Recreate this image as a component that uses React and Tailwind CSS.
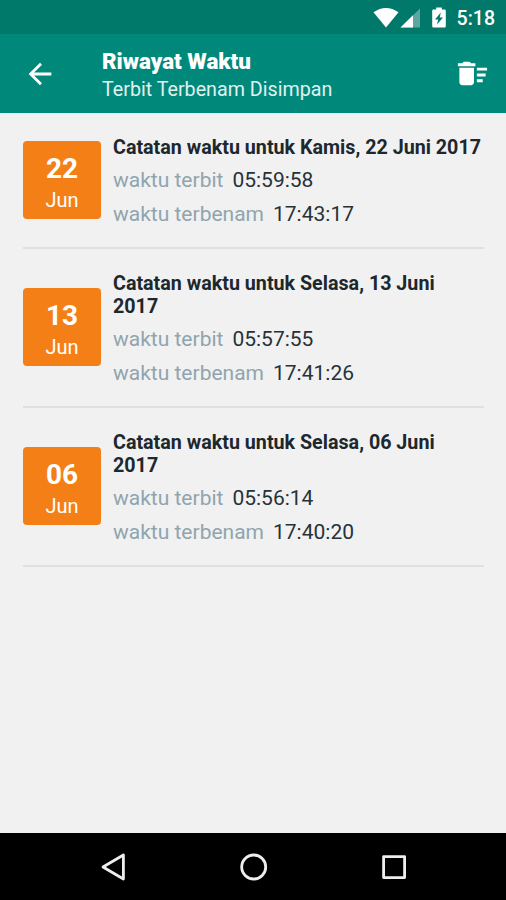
import { MdArrowBack, MdDeleteSweep } from "react-icons/md";

const records = [
  {
    day: "22",
    month: "Jun",
    title: "Catatan waktu untuk Kamis, 22 Juni 2017",
    rise: "05:59:58",
    set: "17:43:17",
  },
  {
    day: "13",
    month: "Jun",
    title: "Catatan waktu untuk Selasa, 13 Juni 2017",
    rise: "05:57:55",
    set: "17:41:26",
  },
  {
    day: "06",
    month: "Jun",
    title: "Catatan waktu untuk Selasa, 06 Juni 2017",
    rise: "05:56:14",
    set: "17:40:20",
  },
];

function StatusBar() {
  return (
    <div className="flex h-[34px] shrink-0 items-center justify-end bg-[#00796b] pr-[11px] pt-[1px] text-white">

      {/* Wifi */}
      <svg width="26" height="21" viewBox="0 0 26 21" fill="currentColor">
        <path d="M0.5 5.2 Q13 -3.4 25.5 5.2 L13 20.4 Z" />
      </svg>

      {/* Signal */}
      <svg className="ml-[1px]" width="21" height="20" viewBox="0 0 21 20" fill="currentColor">
        <path d="M0.5 19.5 L20 0.5 V19.5 Z" opacity="0.35" />
        <path d="M0.5 19.5 L13 7.3 V19.5 Z" />
      </svg>

      {/* Battery */}
      <svg className="ml-[11px]" width="14" height="21" viewBox="0 0 14 21">
        <path d="M4.2 0.5 H9.8 V2.5 H12.6 Q13.8 2.5 13.8 3.7 V19.3 Q13.8 20.5 12.6 20.5 H1.4 Q0.2 20.5 0.2 19.3 V3.7 Q0.2 2.5 1.4 2.5 H4.2 Z" fill="#fff" />
        <path d="M8.8 5.5 L3 12.4 H6.2 L5 17.5 L11 10.5 H7.7 Z" fill="#00796b" />
      </svg>

      <span className="ml-[11px] pt-[3px] text-[19.5px] font-medium leading-none">5:18</span>

    </div>
  );
}

function Header() {
  return (
    <header className="flex h-[79px] shrink-0 items-center bg-[#00897b] pl-[23px] pr-[16px] text-white">

      <button className="block">
        <MdArrowBack size={34} />
      </button>

      <div className="ml-[45px] flex-1 pt-[3px]">
        <h1 className="text-[22.4px] font-black leading-[28px]">Riwayat Waktu</h1>
        <p className="pt-[1px] text-[19.7px] leading-[28px] text-[#e0f2f0]">Terbit Terbenam Disimpan</p>
      </div>

      <button className="block">
        <MdDeleteSweep size={35} />
      </button>

    </header>
  );
}

function TimeLine({ label, value }) {
  return (
    <p className="flex gap-[9px] text-[21px] leading-[34px]">
      <span className="text-[#90a4ae]">{label}</span>
      <span className="text-[#263238]">{value}</span>
    </p>
  );
}

function RecordRow({ record }) {
  return (
    <li className="flex items-center gap-[12px] border-b-2 border-[#e0e0e0] pb-[16px] pt-[23px]">

      <div className="mb-[8px] flex size-[78px] shrink-0 flex-col items-center rounded-[4px] bg-[#f57f17] pt-[11px] text-white">
        <span className="text-[28px] font-bold leading-[34px]">{record.day}</span>
        <span className="text-[20px] leading-[28px]">{record.month}</span>
      </div>

      <div className="flex-1">
        <h2 className="text-[19.7px] font-bold leading-[23px] text-[#1c282e]">{record.title}</h2>
        <div className="pt-[4px]">
          <TimeLine label="waktu terbit" value={record.rise} />
          <TimeLine label="waktu terbenam" value={record.set} />
        </div>
      </div>

    </li>
  );
}

function NavBar() {
  return (
    <nav className="flex h-[67px] shrink-0 items-center justify-between bg-black pl-[100px] pr-[98px]">
      <svg width="28" height="28" viewBox="0 0 28 28" fill="none" stroke="#eee" strokeWidth="2.8" strokeLinejoin="round">
        <path d="M3 14 L23.4 2 V26 Z" />
      </svg>
      <svg width="28" height="28" viewBox="0 0 28 28" fill="none" stroke="#eee" strokeWidth="2.8">
        <circle cx="13.7" cy="14" r="12" />
      </svg>
      <svg width="28" height="28" viewBox="0 0 28 28" fill="none" stroke="#eee" strokeWidth="2.8" strokeLinejoin="round">
        <rect x="3.6" y="3.6" width="21" height="21" />
      </svg>
    </nav>
  );
}

export default function App() {
  return (
    <div className="flex h-[900px] w-[506px] flex-col overflow-hidden bg-[#f1f1f1] font-['Roboto',sans-serif]">

      <StatusBar />
      <Header />

      <ul className="flex-1 pl-[23px] pr-[22px]">
        {records.map((record) => (
          <RecordRow key={record.day} record={record} />
        ))}
      </ul>

      <NavBar />

    </div>
  );
}
